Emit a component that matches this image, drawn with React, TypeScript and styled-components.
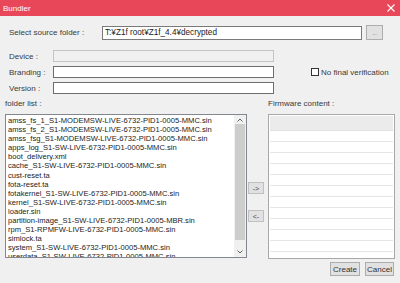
import React from "react";
import styled, { createGlobalStyle } from "styled-components";

const files = [
  "amss_fs_1_S1-MODEMSW-LIVE-6732-PID1-0005-MMC.sin",
  "amss_fs_2_S1-MODEMSW-LIVE-6732-PID1-0005-MMC.sin",
  "amss_fsg_S1-MODEMSW-LIVE-6732-PID1-0005-MMC.sin",
  "apps_log_S1-SW-LIVE-6732-PID1-0005-MMC.sin",
  "boot_delivery.xml",
  "cache_S1-SW-LIVE-6732-PID1-0005-MMC.sin",
  "cust-reset.ta",
  "fota-reset.ta",
  "fotakernel_S1-SW-LIVE-6732-PID1-0005-MMC.sin",
  "kernel_S1-SW-LIVE-6732-PID1-0005-MMC.sin",
  "loader.sin",
  "partition-image_S1-SW-LIVE-6732-PID1-0005-MBR.sin",
  "rpm_S1-RPMFW-LIVE-6732-PID1-0005-MMC.sin",
  "simlock.ta",
  "system_S1-SW-LIVE-6732-PID1-0005-MMC.sin",
  "userdata_S1-SW-LIVE-6732-PID1-0005-MMC.sin",
];

const GlobalStyle = createGlobalStyle`
  body {
    margin: 0;
    background: #f0f0f0;
    font-family: "Liberation Sans", Arial, sans-serif;
    color: #3a3a3a;
  }
`;

export default function App() {
  const [noVerify, setNoVerify] = React.useState(false);

  return (
    <Window>
      <GlobalStyle />
      <TitleBar>
        <span>Bundler</span>
        <svg width="8" height="8" viewBox="0 0 8 8">
          <path d="M0.5 0.5 L7.5 7.5 M7.5 0.5 L0.5 7.5" stroke="#fff" strokeWidth="1.1" />
        </svg>
      </TitleBar>

      <SourceRow>
        <SourceLabel>Select source folder :</SourceLabel>
        <PathInput defaultValue={"T:¥Z1f root¥Z1f_4.4¥decrypted"} />
        <SmallButton>...</SmallButton>
      </SourceRow>

      <Fields>
        <FieldLabel>Device :</FieldLabel>
        <TextBox disabled />
        <span />
        <FieldLabel>Branding :</FieldLabel>
        <TextBox />
        <CheckRow onClick={() => setNoVerify(!noVerify)}>
          <CheckBox>{noVerify ? "✓" : ""}</CheckBox>
          No final verification
        </CheckRow>
        <FieldLabel>Version :</FieldLabel>
        <TextBox />
        <span />
      </Fields>

      <Main>
        <ListLabel>folder list :</ListLabel>
        <span />
        <ListLabel>Firmware content :</ListLabel>

        <ListBox>
          <Items>
            {files.map((f) => (
              <Item key={f}>{f}</Item>
            ))}
          </Items>
          <ScrollBar>
            <svg width="6" height="4" viewBox="0 0 6 4">
              <polyline points="0.5,3.5 3,1 5.5,3.5" fill="none" stroke="#606060" strokeWidth="1" />
            </svg>
            <Thumb />
            <svg width="6" height="4" viewBox="0 0 6 4">
              <polyline points="0.5,0.5 3,3 5.5,0.5" fill="none" stroke="#606060" strokeWidth="1" />
            </svg>
          </ScrollBar>
        </ListBox>

        <MoveButtons>
          <ArrowButton>-&gt;</ArrowButton>
          <ArrowButton>&lt;-</ArrowButton>
        </MoveButtons>

        <Grid>
          <GridHeader />
          {Array.from({ length: 12 }).map((_, i) => (
            <GridRow key={i} />
          ))}
        </Grid>
      </Main>

      <Footer>
        <DialogButton $w={30}>Create</DialogButton>
        <DialogButton $w={29}>Cancel</DialogButton>
      </Footer>
    </Window>
  );
}

const Window = styled.div`
  width: 400px;
  height: 283px;
  display: flex;
  flex-direction: column;
  overflow: hidden;
`;

const TitleBar = styled.div`
  height: 16px;
  background: #e8475a;
  color: #fff;
  font-size: 8px;
  display: flex;
  align-items: center;
  justify-content: space-between;
  padding: 0 5px 0 3px;
  flex-shrink: 0;
`;

const SourceRow = styled.div`
  display: flex;
  align-items: center;
  height: 15px;
  margin-top: 9px;
  padding-left: 9px;
`;

const SourceLabel = styled.div`
  width: 93px;
  font-size: 8px;
`;

const PathInput = styled.input`
  width: 260px;
  height: 14px;
  box-sizing: border-box;
  border: 1px solid #7a7a7a;
  background: #fff;
  font-family: inherit;
  font-size: 8.2px;
  color: #222;
  padding: 0 2px;
  outline: none;
`;

const SmallButton = styled.button`
  width: 17px;
  height: 15px;
  margin-left: 4px;
  box-sizing: border-box;
  border: 1px solid #adadad;
  background: #e1e1e1;
  font-size: 5px;
  color: #555;
  padding: 0;
`;

const Fields = styled.div`
  display: grid;
  grid-template-columns: 44px 221px auto;
  grid-auto-rows: 12px;
  row-gap: 4px;
  align-items: center;
  margin-top: 10px;
  padding-left: 9px;
`;

const FieldLabel = styled.div`
  font-size: 8px;
`;

const TextBox = styled.input`
  height: 12px;
  box-sizing: border-box;
  border: 1px solid ${(p) => (p.disabled ? "#c4c4c4" : "#6e6e6e")};
  background: ${(p) => (p.disabled ? "#f0f0f0" : "#fff")};
  outline: none;
  padding: 0;
`;

const CheckRow = styled.label`
  display: flex;
  align-items: center;
  margin-left: 37px;
  font-size: 8px;
  gap: 2px;
`;

const CheckBox = styled.span`
  width: 8px;
  height: 8px;
  box-sizing: border-box;
  border: 1px solid #333;
  background: #fff;
  font-size: 7px;
  line-height: 6px;
  text-align: center;
`;

const Main = styled.div`
  display: grid;
  grid-template-columns: 242px 21px 127px;
  grid-template-rows: 10px 145px;
  row-gap: 5px;
  margin-top: 5px;
  padding-left: 5px;
`;

const ListLabel = styled.div`
  font-size: 8px;
  line-height: 10px;
`;

const ListBox = styled.div`
  display: flex;
  height: 144px;
  box-sizing: border-box;
  border: 1px solid #828790;
  background: #fff;
  overflow: hidden;
`;

const Items = styled.div`
  flex: 1;
  padding: 1px 0 0 2px;
  overflow: hidden;
`;

const Item = styled.div`
  font-size: 7.6px;
  line-height: 9.1px;
  color: #222;
  white-space: nowrap;
`;

const ScrollBar = styled.div`
  width: 12px;
  background: #f0f0f0;
  display: flex;
  flex-direction: column;
  align-items: center;
  padding: 3px 0;
  gap: 2px;
`;

const Thumb = styled.div`
  flex: 1;
  width: 10px;
  background: #cdcdcd;
  margin-bottom: 8px;
`;

const MoveButtons = styled.div`
  display: flex;
  flex-direction: column;
  align-items: flex-start;
  padding: 68px 0 0 1px;
  gap: 16px;
`;

const ArrowButton = styled.button`
  width: 16px;
  height: 12px;
  box-sizing: border-box;
  border: 1px solid #c0c0c0;
  background: #e1e1e1;
  font-family: inherit;
  font-size: 7px;
  color: #444;
  padding: 0;
`;

const Grid = styled.div`
  height: 145px;
  box-sizing: border-box;
  border: 1px solid #a8a8a8;
  background: #fff;
  padding: 1px;
  overflow: hidden;
`;

const GridHeader = styled.div`
  height: 14px;
  background: #ebebeb;
  border-bottom: 1px solid #e0e0e0;
`;

const GridRow = styled.div`
  height: 10px;
  border-bottom: 1px solid #e6e6e6;
`;

const Footer = styled.div`
  display: flex;
  justify-content: flex-end;
  gap: 5px;
  padding-right: 6px;
  margin-top: 3px;
`;

const DialogButton = styled.button<{ $w: number }>`
  width: ${(p) => p.$w}px;
  height: 14px;
  box-sizing: border-box;
  border: 1px solid #adadad;
  background: #e1e1e1;
  font-family: inherit;
  font-size: 8px;
  color: #333;
  padding: 0;
`;
